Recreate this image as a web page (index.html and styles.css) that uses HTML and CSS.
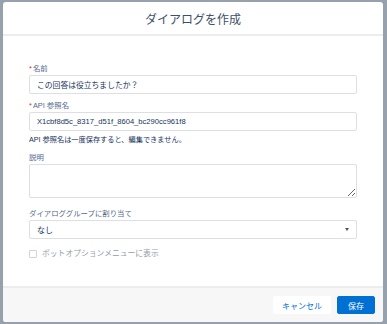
FILE: index.html
```html
<!DOCTYPE html>
<html lang="ja">
<head>
    <meta charset="UTF-8">
    <title>ダイアログを作成</title>
    <link rel="stylesheet" href="styles.css">
</head>
<body>
    <div class="modal">
        <div class="modal-header">
            <h2>ダイアログを作成</h2>
        </div>
        <div class="modal-body">
            <div class="field">
                <label class="label"><abbr>*</abbr>名前</label>
                <input class="input" type="text" value="この回答は役立ちましたか？">
            </div>
            <div class="field field-api">
                <label class="label"><abbr>*</abbr>API 参照名</label>
                <input class="input input-small" type="text" value="X1cbf8d5c_8317_d51f_8604_bc290cc961f8">
                <div class="help">API 参照名は一度保存すると、編集できません。</div>
            </div>
            <div class="field field-desc">
                <label class="label">説明</label>
                <textarea class="textarea"></textarea>
            </div>
            <div class="field">
                <label class="label">ダイアロググループに割り当て</label>
                <div class="select">
                    <span>なし</span>
                    <span class="arrow"></span>
                </div>
            </div>
            <div class="checkbox-row">
                <span class="checkbox"></span>
                <span class="checkbox-label">ボットオプションメニューに表示</span>
            </div>
        </div>
        <div class="modal-footer">
            <button class="btn btn-neutral">キャンセル</button>
            <button class="btn btn-brand">保存</button>
        </div>
    </div>
</body>
</html>
```

FILE: styles.css
```css
html, body {
    margin: 0;
    height: 100%;
    background: #97a1ad;
}
body {
    font-family: "Liberation Sans", "Noto Sans CJK JP", sans-serif;
    color: #16325c;
    padding: 2px 4px 0 3px;
    box-sizing: border-box;
}
.modal {
    width: 380px;
    height: 320px;
    background: #fff;
    border-radius: 3px;
    overflow: hidden;
    display: flex;
    flex-direction: column;
}
.modal-header {
    height: 32px;
    border-bottom: 2px solid #ececec;
    display: flex;
    align-items: center;
    justify-content: center;
}
.modal-header h2 {
    margin: 0;
    font-size: 12px;
    font-weight: normal;
    color: #3e4f6a;
}
.modal-body {
    flex: 1;
    padding: 27px 26px 0 26px;
}
.field {
    margin-bottom: 6px;
}
.field-api {
    margin-bottom: 7px;
}
.field-desc {
    margin-bottom: 10px;
}
.label {
    display: block;
    font-size: 7.4px;
    line-height: 11px;
    color: #54698d;
    margin-bottom: 1px;
}
.label abbr {
    color: #c23934;
    text-decoration: none;
    margin-right: 1px;
}
.input, .textarea, .select {
    display: block;
    box-sizing: border-box;
    width: 100%;
    border: 1px solid #dddfe3;
    border-radius: 2px;
    background: #fff;
    font-family: inherit;
    color: #16325c;
    margin: 0;
}
.input {
    height: 19px;
    padding: 0 7px;
    font-size: 7.8px;
}
.input-small {
    font-size: 7.6px;
}
.help {
    font-size: 7.2px;
    line-height: 11px;
    margin-top: 3px;
    color: #16325c;
}
.textarea {
    height: 34px;
    resize: vertical;
}
.select {
    height: 19px;
    padding: 0 7px;
    font-size: 8px;
    display: flex;
    align-items: center;
    justify-content: space-between;
}
.arrow {
    width: 0;
    height: 0;
    border-left: 2.5px solid transparent;
    border-right: 2.5px solid transparent;
    border-top: 3px solid #4a5568;
}
.checkbox-row {
    display: flex;
    align-items: center;
    gap: 5px;
    margin-top: 9px;
}
.checkbox {
    width: 8px;
    height: 8px;
    box-sizing: border-box;
    border: 1px solid #cfd4db;
    border-radius: 1px;
    background: #fff;
}
.checkbox-label {
    font-size: 7.8px;
    line-height: 11px;
    color: #939ca7;
}
.modal-footer {
    height: 34px;
    border-top: 2px solid #ececec;
    background: #f7f7f7;
    display: flex;
    align-items: center;
    justify-content: flex-end;
    gap: 6px;
    padding: 0 8px;
}
.btn {
    height: 18px;
    font-family: inherit;
    font-size: 8px;
    border-radius: 2px;
    padding: 0 8px;
    cursor: pointer;
}
.btn-neutral {
    background: #fff;
    border: 1px solid #fff;
    color: #0070d2;
}
.btn-brand {
    background: #0070d2;
    border: 1px solid #0070d2;
    color: #fff;
    padding: 0 10px;
}
```
